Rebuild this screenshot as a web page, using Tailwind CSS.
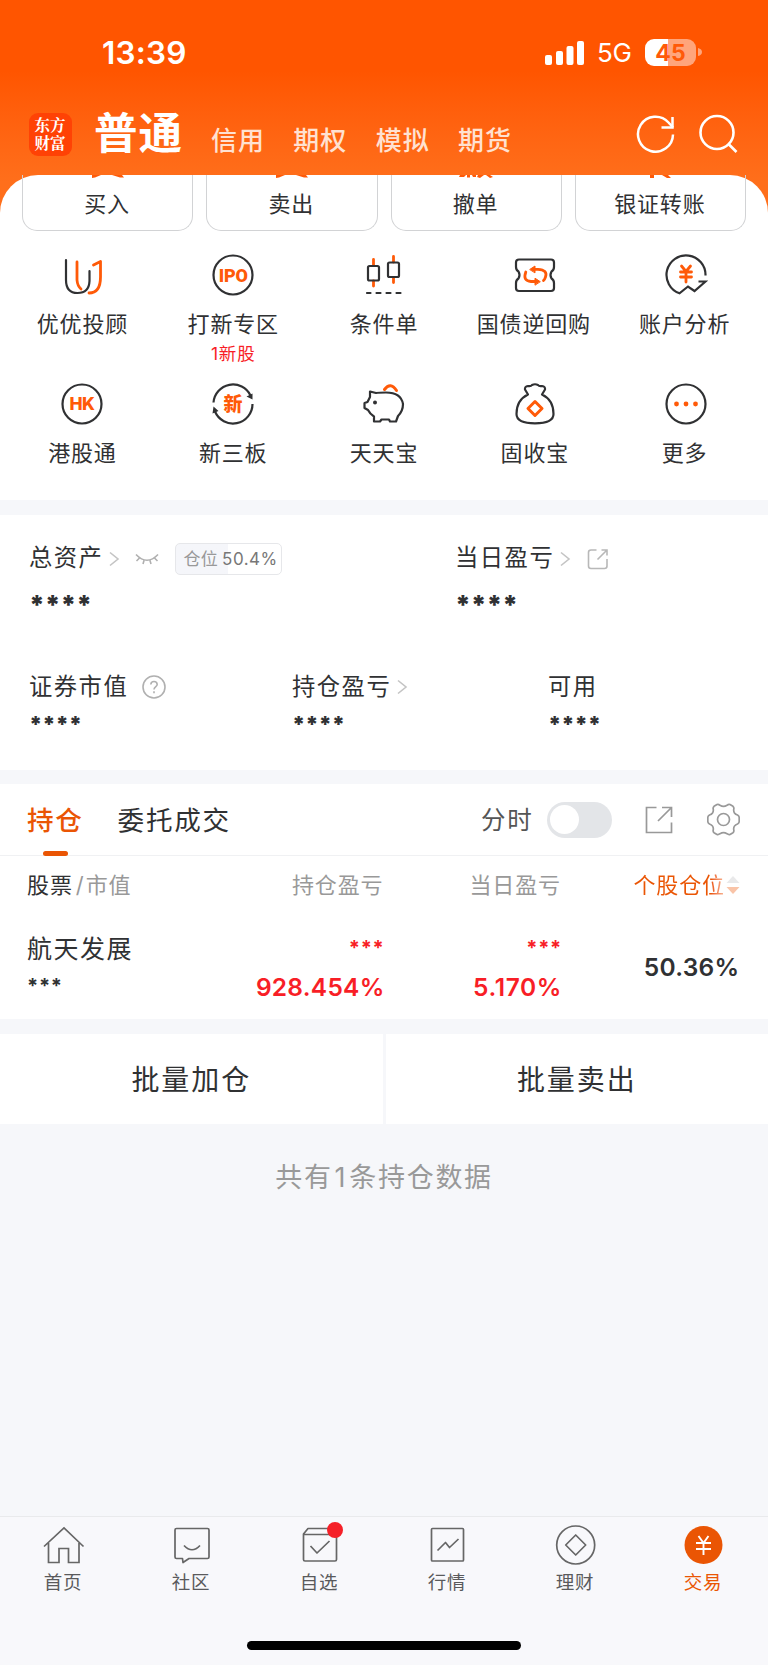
<!DOCTYPE html>
<html lang="zh-CN">
<head>
<meta charset="utf-8">
<title>交易</title>
<script src="https://cdn.jsdelivr.net/npm/@tailwindcss/browser@4"></script>
</head>
<body class="w-[768px] h-[1665px] overflow-hidden bg-[#f6f7fa] font-['Inter','Noto_Sans_CJK_SC',sans-serif] text-[#303133] whitespace-nowrap flex flex-col">

<!-- header -->
<header class="h-[215px] shrink-0 bg-linear-to-b from-[#ff5500] from-33% to-[#ff6f1b] to-85%">
  <div class="h-[104px] pt-[34px] pl-[102px] pr-[66px] flex justify-between">
    <div class="text-[31.5px] leading-[38px] tracking-[0.2px] font-semibold text-white">13:39</div>
    <div class="flex h-9 items-center">
      <svg class="w-10 h-6 mt-px" viewBox="0 0 40 24" fill="#fff"><rect x="0" y="14" width="7" height="10" rx="2"/><rect x="11" y="10" width="7" height="14" rx="2"/><rect x="21.500" y="5" width="7" height="19" rx="2"/><rect x="32" y="0" width="7" height="24" rx="2"/></svg>
      <div class="ml-[12px] w-[36px] text-[26px] leading-9 text-white tracking-[-0.3px] pt-[2px]">5G</div>
      <div class="ml-[12px] w-[51px] h-[27px] rounded-[9px] bg-linear-to-r from-white from-45% to-[#ffa57b] to-45% text-[#ff5a08] text-[23px] leading-[28px] font-bold text-center">45</div>
      <svg class="ml-[2px] w-1 h-2" viewBox="0 0 4 8"><path d="M0 0Q4 1 4 4T0 8Z" fill="#ffa57b"/></svg>
    </div>
  </div>
  <div class="h-[71px] pl-[29px] pr-[30px] flex items-start">
    <div class="mt-[9px] w-[43px] h-[43px] rounded-[9px] bg-[#ff4205] text-white font-['Noto_Serif_CJK_SC','Noto_Sans_CJK_SC',serif] font-bold text-[15.500px] text-center pt-[2px] pr-px"><div class="h-[18px] leading-[18px]">东方</div><div class="h-[18px] leading-[18px]">财富</div></div>
    <div class="ml-[22px] w-[117px] mt-[4px] text-[43.500px] leading-[50px] tracking-[1px] font-bold text-white">普通</div>
    <div class="flex gap-[28.300px] mt-[17px] text-[26px] leading-[40px] tracking-[1px] font-medium text-[#ffe1d1]"><span>信用</span><span>期权</span><span>模拟</span><span>期货</span></div>
    <svg class="ml-auto mt-[10px] w-[40px] h-[40px]" viewBox="0 0 40 40" fill="none" stroke="#fff" stroke-width="2.500"><path d="M37 20.500A17.500 17.500 0 1 1 32.500 8.500L37 13.500"/><path d="M36.500 3V13.500H25.500"/></svg>
    <svg class="ml-[22px] mt-[10px] w-[40px] h-[40px]" viewBox="0 0 40 40" fill="none" stroke="#fff" stroke-width="2.600"><circle cx="19" cy="18.500" r="16.500"/><path d="M30 29.500L38.500 38"/></svg>
  </div>
</header>

<!-- shortcuts -->
<section class="-mt-10 h-[325px] shrink-0 bg-white rounded-t-[38px]">
  <div class="px-[22px] grid grid-cols-4 gap-x-[13px] h-[56px] text-[22px] tracking-[0.8px] text-center">
    <div class="border border-t-0 border-[#d2d3d5] rounded-b-[15px]"><svg class="block mx-auto w-[34px] h-[3px]" viewBox="0 0 34 3" fill="#ff5a08"><path d="M1 0H10L4 2.500L1 3ZM21 0H31L33 2.500H29Z"/></svg><div class="leading-[52px] pr-px">买入</div></div>
    <div class="border border-t-0 border-[#d2d3d5] rounded-b-[15px]"><svg class="block mx-auto w-[34px] h-[3px]" viewBox="0 0 34 3" fill="#ff5a08"><path d="M1 0H10L4 2.500L1 3ZM21 0H31L33 2.500H29Z"/></svg><div class="leading-[52px] pr-px">卖出</div></div>
    <div class="border border-t-0 border-[#d2d3d5] rounded-b-[15px]"><svg class="block mx-auto w-[34px] h-[3px]" viewBox="0 0 34 3" fill="#ff5a08"><path d="M1 0H7L5 2H0ZM8 0H11V2.500H8ZM13 0H17V2H14ZM19 0H25L21 3L18 2ZM27 0H31L34 2L31 3Z"/></svg><div class="leading-[52px] pr-px">撤单</div></div>
    <div class="border border-t-0 border-[#d2d3d5] rounded-b-[15px]"><svg class="block mx-auto w-[34px] h-[3px]" viewBox="0 0 34 3" fill="#ff5a08"><path d="M7 0H11V3H7ZM19 0H25L28 3H24Z"/></svg><div class="leading-[52px] pr-px">银证转账</div></div>
  </div>
  <div class="pl-[7px] pr-[7px] pt-[22px] grid grid-cols-5 grid-rows-[128.500px_128.500px] text-[22px] tracking-[0.8px] text-center leading-[34px]">
    <div class="flex flex-col items-center">
      <svg class="w-11 h-11" viewBox="0 0 44 44" fill="none" stroke-width="2.200" stroke-linecap="round" stroke-linejoin="round"><path stroke="#303133" d="M6 7V27Q6 40 17.500 40T29.500 28V18"/><path stroke="#ff5a08" stroke-width="2.800" d="M17 9V27Q17.500 33 21 36M33.500 12L40.500 8.500V24Q40.500 40 29 40"/></svg>
      <div class="mt-[10px]">优优投顾</div></div>
    <div class="flex flex-col items-center">
      <svg class="w-11 h-11" viewBox="0 0 44 44"><circle cx="22" cy="22" r="19.500" fill="none" stroke="#303133" stroke-width="2.200"/><text x="22.200" y="28.500" text-anchor="middle" font-family="Roboto" font-weight="900" font-size="18" letter-spacing="-0.300" fill="#ff5a08">IPO</text></svg>
      <div class="mt-[10px]">打新专区</div><div class="mt-px text-[17.500px] leading-[24px] text-[#f81e26]">1新股</div></div>
    <div class="flex flex-col items-center">
      <svg class="w-11 h-11" viewBox="0 0 44 44" fill="none" stroke-width="2.200" stroke-linecap="round"><path stroke="#ff5a08" stroke-width="2.800" d="M11.500 6.500V12M11.500 28V33M31.500 3.500V9M31.500 25V29.500"/><g stroke="#303133"><rect x="6" y="13" width="11" height="14.500" rx="1.500"/><rect x="26" y="9.500" width="11" height="14.500" rx="1.500"/><path d="M5 40H8.500M14.500 40H18.500M24.500 40H28.500M34.500 40H38.500"/></g></svg>
      <div class="mt-[10px]">条件单</div></div>
    <div class="flex flex-col items-center">
      <svg class="w-11 h-11" viewBox="0 0 44 44" fill="none" stroke-width="2.200" stroke-linecap="round" stroke-linejoin="round"><path stroke="#303133" d="M6 6.500H38Q41 6.500 41 9.500V14Q41 17 38.500 18.500Q36.500 22 38.500 25.500Q41 27 41 30V35Q41 38 38 38H6Q3 38 3 35V30Q3 27 5.500 25.500Q7.500 22 5.500 18.500Q3 17 3 14V9.500Q3 6.500 6 6.500Z"/><path stroke="#ff5a08" stroke-width="2.800" d="M12.800 19Q9.500 28 18 28.500H22M20 16.300H25Q35 17 32.500 24Q31.500 27 30.500 27.500"/><path fill="#ff5a08" d="M17 16.300L22 13V19.500ZM27 28.500L22 25.200V31.800Z" stroke="#ff5a08" stroke-width="1"/></svg>
      <div class="mt-[10px] pr-[2px]">国债逆回购</div></div>
    <div class="flex flex-col items-center">
      <svg class="w-11 h-11" viewBox="0 0 44 44" fill="none" stroke-width="2.200"><path stroke="#303133" d="M41.500 22.500A19.500 19.500 0 1 0 15.500 40.300L24 33.500L30.500 38L41.500 28.500H34.500"/><path stroke="#ff5a08" stroke-width="2.800" stroke-linecap="round" d="M17.500 13L22 18.500L26.500 13M22 19V29M16.500 19H27.500M16.500 24H27.500"/></svg>
      <div class="mt-[10px] pr-[2px]">账户分析</div></div>
    <div class="flex flex-col items-center">
      <svg class="w-11 h-11" viewBox="0 0 44 44"><circle cx="22" cy="22" r="19.500" fill="none" stroke="#303133" stroke-width="2.200"/><text x="21.800" y="28.200" text-anchor="middle" font-family="Inter" font-weight="800" font-size="17.500" letter-spacing="-0.800" fill="#ff5a08">HK</text></svg>
      <div class="mt-[10px]">港股通</div></div>
    <div class="flex flex-col items-center">
      <svg class="w-11 h-11" viewBox="0 0 44 44" fill="none"><path stroke="#303133" stroke-width="2.200" d="M2.500 20.500A19.500 19.500 0 0 1 39.500 13.500M41.500 22A19.500 19.500 0 0 1 4 29.500"/><path fill="#303133" d="M41.500 17.500L41.500 11.500L35.500 14.500ZM2.500 24.500L1.500 31.500L7.500 29Z"/><text x="22" y="29" text-anchor="middle" font-family="Noto Sans CJK SC" font-weight="900" font-size="19" letter-spacing="0" fill="#ff5a08">新</text></svg>
      <div class="mt-[10px]">新三板</div></div>
    <div class="flex flex-col items-center">
      <svg class="w-11 h-11" viewBox="0 0 44 44" fill="none" stroke-width="2.200" stroke-linejoin="round" stroke-linecap="round"><path stroke="#303133" d="M14 11L8 9.500V15L5.500 20L2.500 21V26L6 28Q8 32 12 34.500V39.500H18L19.500 37.500H27L28 39.500H34L36 34Q41 29 41 22Q39 10.500 24 10.500Q17 10.500 14 11"/><circle cx="13" cy="20.500" r="2" fill="#303133"/><path stroke="#ff5a08" stroke-width="3" d="M22.500 7.500Q28.500 -0.500 34.500 8.500"/></svg>
      <div class="mt-[10px]">天天宝</div></div>
    <div class="flex flex-col items-center">
      <svg class="w-11 h-11" viewBox="0 0 44 44" fill="none" stroke-width="2.200" stroke-linejoin="round"><path stroke="#303133" d="M15 12.500L12 7.500Q11.500 4.500 15 4Q18 4.500 19 3Q22 1.500 25 3Q26 4.500 29 4Q32.500 4.500 32 7.500L29 12.500Q40.500 18 40.500 32Q40.500 41.300 22 41.300Q3.500 41.300 3.500 32Q3.500 18 15 12.500Z"/><path stroke="#ff5a08" stroke-width="3" d="M22 19.500L29 26.500L22 33.500L15 26.500Z"/></svg>
      <div class="mt-[10px]">固收宝</div></div>
    <div class="flex flex-col items-center">
      <svg class="w-11 h-11" viewBox="0 0 44 44"><circle cx="22" cy="22" r="19.500" fill="none" stroke="#303133" stroke-width="2.200"/><g fill="#ff5a08"><circle cx="12.500" cy="22" r="2.400"/><circle cx="22" cy="22" r="2.400"/><circle cx="31.500" cy="22" r="2.400"/></g></svg>
      <div class="mt-[10px] pr-[2px]">更多</div></div>
  </div>
</section>

<!-- assets summary -->
<section class="mt-[15px] h-[255px] shrink-0 bg-white px-[29px] text-[23.300px] tracking-[1.500px]">
  <div class="pt-[26px] flex h-[61px] items-center">
    <div class="w-[426px] flex items-center"><span>总资产</span>
      <svg class="ml-[5px] w-3 h-4" viewBox="0 0 12 16" fill="none" stroke="#c4c4c4" stroke-width="1.600"><path d="M2 1.500L10 8L2 14.500"/></svg>
      <svg class="ml-[15px] w-6 h-4" viewBox="0 0 24 16" fill="none" stroke="#b0b0b0" stroke-width="1.600"><path d="M1 3.500Q12 15 23 3.500M4.500 7L1.500 10M9 9.500L8 13M15 9.500L16 13M19.500 7L22.500 10"/></svg>
      <div class="ml-[16px] w-[107px] h-[32px] rounded-[5px] border border-[#e6e7ea] bg-linear-to-r from-[#f5f6fa] from-50% to-white to-50% pl-[7px] text-[17px] leading-[31px] tracking-[0.300px] text-[#999]">仓位 <span class="text-[#777] tracking-[0.500px] -ml-[1px]">50.4%</span></div>
    </div>
    <div class="flex items-center"><span>当日盈亏</span>
      <svg class="ml-[5px] w-3 h-4" viewBox="0 0 12 16" fill="none" stroke="#c4c4c4" stroke-width="1.600"><path d="M2 1.500L10 8L2 14.500"/></svg>
      <svg class="ml-[16px] w-[22px] h-[22px]" viewBox="0 0 22 22" fill="none" stroke="#b8b8b8" stroke-width="1.600"><path d="M9.500 2H4Q1.500 2 1.500 4.500V18Q1.500 20.500 4 20.500H17.500Q20 20.500 20 18V11M10.500 11.500L20 2M14.500 2H20V7.500"/></svg>
    </div>
  </div>
  <div class="flex h-[40px] text-[26px] font-black tracking-[-0.100px] leading-[40px] pt-[9px]"><div class="w-[426px]">****</div><div>****</div></div>
  <div class="flex items-center h-[44px] mt-[49px]">
    <div class="w-[263px] flex items-center"><span>证券市值</span>
      <svg class="ml-[14px] w-6 h-6" viewBox="0 0 24 24" fill="none" stroke="#b0b0b0" stroke-width="1.600"><circle cx="12" cy="12" r="11"/><path d="M8.800 9.500Q9 6.500 12 6.500T15.200 9.500C15.200 11.500 12 11.800 12 14.500M12 16.300V18.300"/></svg>
    </div>
    <div class="w-[256px] flex items-center"><span>持仓盈亏</span>
      <svg class="ml-[5px] w-3 h-4" viewBox="0 0 12 16" fill="none" stroke="#c4c4c4" stroke-width="1.600"><path d="M2 1.500L10 8L2 14.500"/></svg>
    </div>
    <div>可用</div>
  </div>
  <div class="flex h-[30px] text-[22px] font-black tracking-[-0.100px] leading-[30px]"><div class="w-[263px]">****</div><div class="w-[256px]">****</div><div>****</div></div>
</section>

<!-- holdings -->
<section class="mt-[14px] h-[235px] shrink-0 bg-white">
  <div class="h-[72px] border-b border-[#f0f1f3] pl-[27px] pr-[28.500px] flex items-center text-[26.600px] tracking-[1.700px]">
    <div class="relative font-medium text-[#ea5504] leading-[73px] pt-px">持仓<span class="absolute left-[16px] bottom-[1px] w-[25px] h-[5px] rounded-full bg-[#ea5504]"></span></div>
    <div class="ml-[34px] leading-[73px] pt-px">委托成交</div>
    <div class="ml-auto text-[24.500px] text-[#555] pt-[2px]">分时</div>
    <div class="ml-[13px] w-[65px] h-9 rounded-full bg-[#e3e5e8] p-[3.500px]"><div class="w-[29px] h-[29px] rounded-full bg-white"></div></div>
    <svg class="ml-[33.500px] w-7 h-7" viewBox="0 0 28 28" fill="none" stroke="#999" stroke-width="1.700"><path d="M11.500 1.500H1.500V26.500H26.500V16.500M13 15L26.500 1.500M17 1.500H26.500V11"/></svg>
    <svg class="ml-[33.500px] w-[33px] h-[33px]" viewBox="0 0 33 33" fill="none" stroke="#999" stroke-width="1.700" stroke-linejoin="round"><circle cx="16.500" cy="16.500" r="6"/><path d="M10 1.500Q11.500 1 13 2.300Q16.500 4.500 20 2.300Q21.500 1 23 1.500L26 3.300Q27.300 4.500 26.700 6.500Q26.300 10.500 30.500 12Q32.200 13 32.200 14.500V18.500Q32.200 20 30.500 21Q26.300 22.500 26.700 26.500Q27.300 28.500 26 29.700L23 31.500Q21.500 32 20 30.700Q16.500 28.500 13 30.700Q11.500 32 10 31.500L7 29.700Q5.700 28.500 6.300 26.500Q6.700 22.500 2.500 21Q0.800 20 0.800 18.500V14.500Q0.800 13 2.500 12Q6.700 10.500 6.300 6.500Q5.700 4.500 7 3.300Z"/></svg>
  </div>
  <div class="h-[58px] pl-[27px] pr-[28px] flex items-center text-[22px] tracking-[0.900px] text-[#999]">
    <div class="w-[150px]"><span class="text-[#303133]">股票</span><span class="ml-[3px] mr-[1px]">/</span>市值</div>
    <div class="w-[206.500px] text-right">持仓盈亏</div>
    <div class="w-[177.500px] text-right">当日盈亏</div>
    <div class="ml-auto flex items-center"><span class="bg-linear-to-r from-[#ea5504] from-85% to-[#f7bd9d] bg-clip-text text-transparent">个股仓位</span><svg class="ml-[1px] w-[14px] h-5" viewBox="0 0 14 20"><path d="M7 1L13.500 8H0.500Z" fill="#e9e9ea"/><path d="M7 19L13.500 12H0.500Z" fill="#f9c4a8"/></svg></div>
  </div>
  <div class="h-[105px] pl-[27px] pr-[28.500px] flex">
    <div class="w-[150px] pt-[17px]"><div class="text-[25px] leading-[36px] tracking-[1.500px]">航天发展</div><div class="text-[20px] leading-[34px] font-bold tracking-[0.700px] pt-[2px]">***</div></div>
    <div class="w-[207.500px] text-right text-[#f81e26] pt-[17px] font-semibold"><div class="text-[20px] leading-[34px] font-bold tracking-[0.700px]">***</div><div class="text-[24.500px] leading-[40px] tracking-[0.250px] pt-[2px]">928.454%</div></div>
    <div class="w-[177.500px] text-right text-[#f81e26] pt-[17px] font-semibold"><div class="text-[20px] leading-[34px] font-bold tracking-[0.700px]">***</div><div class="text-[24.500px] leading-[40px] tracking-[0.600px] pt-[2px]">5.170%</div></div>
    <div class="ml-auto text-[24.500px] leading-[40px] tracking-[0.300px] pt-[32.500px] font-semibold">50.36%</div>
  </div>
</section>

<div class="mt-[15px] h-[89.500px] shrink-0 flex gap-[3px] text-[28px] leading-[92px] tracking-[1.900px] text-center">
  <div class="w-[382.500px] bg-white overflow-hidden">批量加仓</div>
  <div class="flex-1 bg-white overflow-hidden">批量卖出</div>
</div>
<div class="mt-[34px] text-center text-[27px] leading-10 tracking-[1.700px] text-[#999]">共有<span class="mx-[2px]">1</span>条持仓数据</div>

<!-- bottom tabs -->
<nav class="mt-auto h-[149px] shrink-0 bg-[#f8f8fb] border-t border-[#e9eaec]">
  <div class="-ml-px mr-px grid grid-cols-6 pt-[6px] text-[18.500px] leading-[30px] tracking-[0.800px] text-center text-[#5a5a5c]">
    <div><svg class="block mx-auto w-11 h-11" viewBox="0 0 44 44" fill="none" stroke="#666" stroke-width="1.700"><path d="M3 23.500L23 5L42.500 23.500M7.500 20V39.500H18V25.500H27.500V39.500H38V20"/></svg>首页</div>
    <div><svg class="block mx-auto w-11 h-11" viewBox="0 0 44 44" fill="none" stroke="#666" stroke-width="1.700" stroke-linejoin="round"><path d="M7.500 5.500H38.500Q40 5.500 40 7V34Q40 35.500 38.500 35.500H20L14 39.500L13.500 35.500H7.500Q6 35.500 6 34V7Q6 5.500 7.500 5.500ZM15 22.500Q23 31 31 22.500"/></svg>社区</div>
    <div><div class="relative w-11 h-11 mx-auto"><svg class="w-11 h-11" viewBox="0 0 44 44" fill="none" stroke="#666" stroke-width="1.700" stroke-linejoin="round"><path d="M6.500 11L11 5.500H35L39.500 11V36.500Q39.500 38 38 38H8Q6.500 38 6.500 36.500ZM6.500 11.500H39.500M13.500 23L20 30L32.500 18"/></svg><span class="absolute left-[30px] -top-[1px] w-4 h-4 rounded-full bg-[#f52028]"></span></div>自选</div>
    <div><svg class="block mx-auto w-11 h-11" viewBox="0 0 44 44" fill="none" stroke="#666" stroke-width="1.700" stroke-linejoin="round"><rect x="6.500" y="5.500" width="32" height="32.500" rx="1"/><path d="M12.500 27.500L20.500 19.500L24.500 24.500L33.500 16"/></svg>行情</div>
    <div><svg class="block mx-auto w-11 h-11" viewBox="0 0 44 44" fill="none" stroke="#666" stroke-width="1.700" stroke-linejoin="round"><circle cx="22.700" cy="22" r="19"/><path d="M22.700 12L32.700 22L22.700 32L12.700 22Z"/></svg>理财</div>
    <div class="text-[#ea5504]"><svg class="block mx-auto w-11 h-11" viewBox="0 0 44 44" fill="none" stroke="#fff" stroke-width="1.900"><circle cx="22.500" cy="22" r="19" fill="#ea5504" stroke="none"/><path d="M17.500 13L22.500 20L27.500 13M22.500 20V32M15 20H30M15 26H30"/></svg>交易</div>
  </div>
  <div class="mx-auto mt-[44px] w-[274px] h-[9px] rounded-full bg-black"></div>
</nav>
</body>
</html>
